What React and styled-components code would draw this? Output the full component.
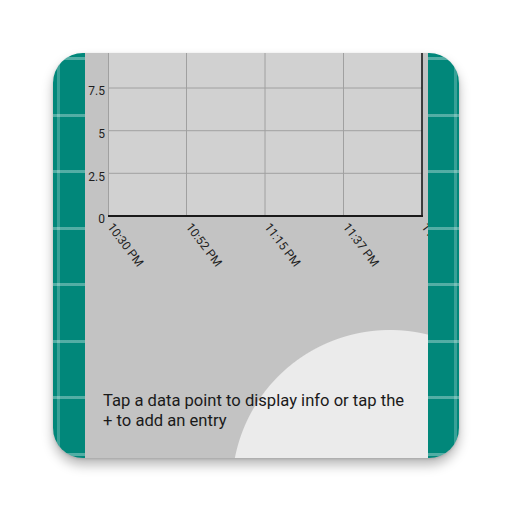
import React from "react";
import styled, { createGlobalStyle } from "styled-components";

const Global = createGlobalStyle`
  html, body { margin: 0; padding: 0; background: #ffffff; }
  body { font-family: Roboto, "Noto Sans", sans-serif; }
`;

const Stage = styled.div`
  width: 512px;
  height: 512px;
  box-sizing: border-box;
  padding: 53px 0 0 53px;
`;

const Icon = styled.div`
  width: 406px;
  height: 405px;
  border-radius: 30px;
  overflow: hidden;
  display: grid;
  grid-template-columns: 32px 1fr 31px;
  box-shadow: 0 7px 12px rgba(0, 0, 0, 0.28), 0 1px 3px rgba(0, 0, 0, 0.15),
    inset 0 -2px 1px rgba(0, 0, 0, 0.25);
  position: relative;
`;

const Band = styled.div`
  background-color: #01877a;
  background-image:
    repeating-linear-gradient(
      to bottom,
      transparent 0 4.5px,
      rgba(255, 255, 255, 0.32) 4.5px 7.5px,
      transparent 7.5px 56.5px
    ),
    linear-gradient(
      to right,
      transparent 0 ${(p) => p.$lineX - 1.5}px,
      rgba(255, 255, 255, 0.22) ${(p) => p.$lineX - 1.5}px ${(p) => p.$lineX + 1.5}px,
      transparent ${(p) => p.$lineX + 1.5}px
    );
`;

const Panel = styled.div`
  display: flex;
  flex-direction: column;
  background: radial-gradient(
    circle 158px at 305px 435px,
    #ebebeb 157.5px,
    #c3c3c3 158.5px
  );
  padding-bottom: 27px;
  min-width: 0;
  overflow: hidden;
`;

const Chart = styled.svg`
  display: block;
  flex: none;
`;

const Hint = styled.p`
  margin: auto 0 0 0;
  padding: 0 0 0 18px;
  font-family: Roboto, sans-serif;
  font-size: 16.6px;
  line-height: 20px;
  color: #1a1a1a;
  white-space: nowrap;
`;

const yLabels = [
  { t: "7.5", y: 41.5 },
  { t: "5", y: 84.5 },
  { t: "2.5", y: 128 },
  { t: "0", y: 169.5 },
];
const xLabels = [
  { t: "10:30 PM", x: 23 },
  { t: "10:52 PM", x: 101.5 },
  { t: "11:15 PM", x: 180 },
  { t: "11:37 PM", x: 258.5 },
  { t: "11:59 PM", x: 337 },
];
const hLines = [35, 77.7, 120.3];
const vLines = [101.5, 180, 258.5];

function TimeChart() {
  return (
    <Chart width="343" height="280" viewBox="0 0 343 280">
      <rect x="23" y="-20" width="314" height="183" fill="#d1d1d1" />
      <line x1="23.5" y1="-20" x2="23.5" y2="163" stroke="#a0a0a0" strokeWidth="1" />
      {hLines.map((y) => (
        <line key={y} x1="23" y1={y} x2="337" y2={y} stroke="#a0a0a0" strokeWidth="1" />
      ))}
      {vLines.map((x) => (
        <line key={x} x1={x} y1="-20" x2={x} y2="163" stroke="#a0a0a0" strokeWidth="1" />
      ))}
      <line x1="337" y1="-20" x2="337" y2="164" stroke="#1a1a1a" strokeWidth="1.6" />
      <line x1="23" y1="163" x2="338" y2="163" stroke="#1a1a1a" strokeWidth="2" />
      {yLabels.map((l) => (
        <text
          key={l.t}
          x="20"
          y={l.y}
          textAnchor="end"
          fontFamily="Roboto, sans-serif"
          fontSize="12"
          fill="#1e1e1e"
        >
          {l.t}
        </text>
      ))}
      {xLabels.map((l) => (
        <text
          key={l.t}
          x={l.x - 1}
          y="174"
          transform={`rotate(53 ${l.x - 1} 174)`}
          fontFamily="Roboto, sans-serif"
          fontSize="12"
          fill="#1e1e1e"
        >
          {l.t}
        </text>
      ))}
    </Chart>
  );
}

export default function App() {
  return (
    <>
      <Global />
      <Stage>
        <Icon>
          <Band $lineX={6} />
          <Panel>
            <TimeChart />
            <Hint>
              Tap a data point to display info or tap the
              <br />+ to add an entry
            </Hint>
          </Panel>
          <Band $lineX={27} />
        </Icon>
      </Stage>
    </>
  );
}
